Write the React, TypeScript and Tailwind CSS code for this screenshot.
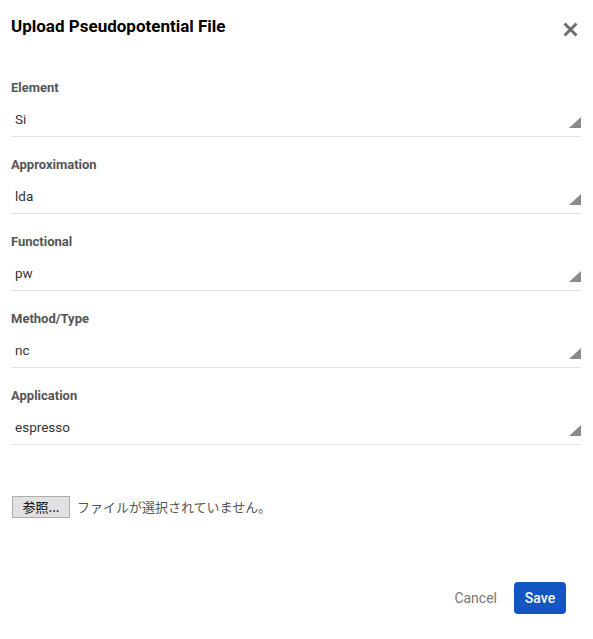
import React from "react";

const FIELDS = [
  { label: "Element", value: "Si" },
  { label: "Approximation", value: "lda" },
  { label: "Functional", value: "pw" },
  { label: "Method/Type", value: "nc" },
  { label: "Application", value: "espresso" },
];

function SelectField({ label, value }: { label: string; value: string }) {
  return (
    <div className="mb-[20px]">
      <label className="block h-4 text-[13px] font-bold leading-4 text-[#555]">{label}</label>
      <div className="relative mt-2 flex h-[33px] items-center border-b border-[#e0e0e0] pl-1 text-[13.5px] text-[#333]">
        <span className="pb-px">{value}</span>
        <svg
          className="absolute bottom-[8px] right-0 h-[11px] w-[12px]"
          viewBox="0 0 12 11"
          aria-hidden
        >
          <path d="M12 0L12 11L0 11Z" fill="#8a8a8a" />
        </svg>
      </div>
    </div>
  );
}

export default function App() {
  return (
    <div
      className="h-[639px] w-[593px] bg-white pl-[11px] pr-[12px]"
      style={{ fontFamily: "Roboto, 'Noto Sans CJK JP', sans-serif" }}
    >
      {/* Header */}
      <div className="flex items-start justify-between pt-[16px]">
        <h2 className="text-[17px] font-bold leading-5 text-black">Upload Pseudopotential File</h2>
        <button type="button" className="mr-[3px] mt-[6px]" aria-label="Close">
          <svg width="15" height="15" viewBox="0 0 15 15" aria-hidden>
            <path d="M1.5 1.5L13.5 13.5M13.5 1.5L1.5 13.5" stroke="#6f6f6f" strokeWidth="3" />
          </svg>
        </button>
      </div>

      {/* Fields */}
      <div className="mt-[43px]">
        {FIELDS.map((f) => (
          <SelectField key={f.label} label={f.label} value={f.value} />
        ))}
      </div>

      {/* File input */}
      <div className="mt-[51px] flex items-center gap-[7px] pl-px">
        <button
          type="button"
          className="flex h-[22px] w-[58px] items-center justify-center border border-[#adadad] bg-[#e1e1e1] text-[13px] text-black"
          style={{ fontFamily: "'Noto Sans CJK JP', sans-serif" }}
        >
          参照...
        </button>
        <span
          className="text-[13px] text-[#555]"
          style={{ fontFamily: "'Noto Sans CJK JP', sans-serif" }}
        >
          ファイルが選択されていません。
        </span>
      </div>

      {/* Footer */}
      <div className="mt-[64px] flex items-center justify-end gap-[17px] pr-[15px]">
        <button type="button" className="text-[14px] text-[#777]">
          Cancel
        </button>
        <button
          type="button"
          className="h-8 w-[52px] rounded-[4px] bg-[#1355c3] text-[14px] font-medium text-white"
        >
          Save
        </button>
      </div>
    </div>
  );
}
